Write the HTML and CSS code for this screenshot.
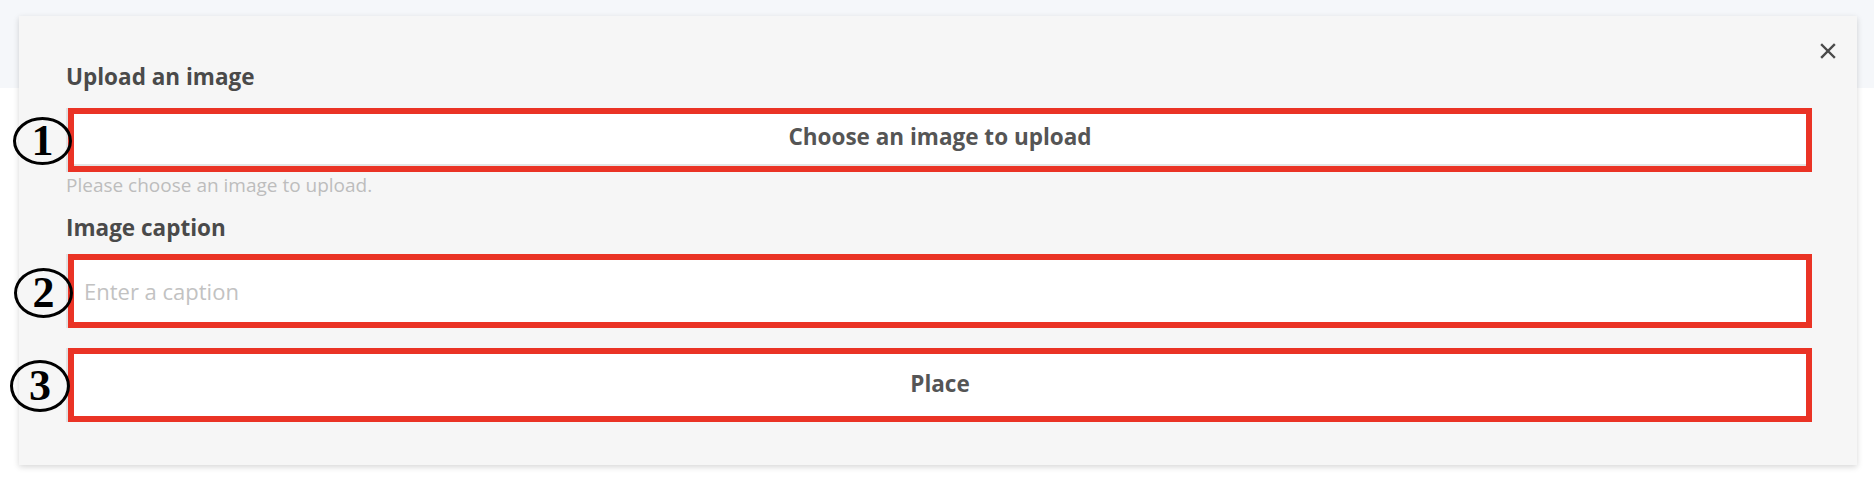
FILE: index.html
```html
<!DOCTYPE html>
<html>
<head>
<meta charset="utf-8">
<link rel="stylesheet" href="styles.css">
</head>
<body>
<div class="panel">
  <button class="close" aria-label="Close">
    <svg width="16" height="16" viewBox="0 0 16 16"><path d="M2 2L14 14M14 2L2 14" stroke="#4a4a4a" stroke-width="2.4" stroke-linecap="square"/></svg>
  </button>
  <div class="label label-first">Upload an image</div>
  <div class="field field-upload">
    <span class="marker marker-1">1</span>
    <button class="box box-upload">Choose an image to upload</button>
  </div>
  <div class="help">Please choose an image to upload.</div>
  <div class="label label-second">Image caption</div>
  <div class="field field-caption">
    <span class="marker marker-2">2</span>
    <input class="box box-input" type="text" placeholder="Enter a caption">
  </div>
  <div class="field field-place">
    <span class="marker marker-3">3</span>
    <button class="box box-place">Place</button>
  </div>
</div>
</body>
</html>
```

FILE: styles.css
```css
html, body {
  margin: 0;
  padding: 0;
}
body {
  width: 1874px;
  height: 484px;
  background: linear-gradient(#f5f7fa 0, #f5f7fa 88px, #ffffff 88px);
  font-family: "Open Sans", "Liberation Sans", sans-serif;
  overflow: hidden;
}
.panel {
  position: relative;
  box-sizing: border-box;
  margin: 16px 0 0 19px;
  width: 1838px;
  height: 449px;
  background: #f6f6f6;
  box-shadow: 0 2px 6px rgba(0, 0, 0, 0.16);
  padding: 47px 45px 0 47px;
  display: flex;
  flex-direction: column;
}
.close {
  position: absolute;
  top: 27px;
  right: 21px;
  width: 16px;
  height: 16px;
  padding: 0;
  border: 0;
  background: none;
  display: flex;
}
.label {
  font-size: 22.5px;
  font-weight: 700;
  line-height: 28px;
  color: #4a4a4a;
}
.label-second {
  margin-top: 18px;
}
.field {
  position: relative;
  border-left: 2px solid #e2e2e2;
  display: flex;
}
.field-upload {
  margin-top: 17px;
}
.field-caption {
  margin-top: 12px;
}
.field-place {
  margin-top: 20px;
}
.box {
  box-sizing: border-box;
  flex: 1;
  border: 6px solid #ea3325;
  background: #ffffff;
  font-family: "Open Sans", "Liberation Sans", sans-serif;
  font-size: 22.5px;
  color: #555555;
  margin: 0;
  outline: none;
}
.box-upload {
  height: 64px;
  font-weight: 700;
  box-shadow: inset 0 -2px 0 #e4e4e4;
  padding: 0 0 8px;
}
.box-input {
  height: 74px;
  padding: 0 10px;
  font-size: 22px;
  font-weight: 400;
}
.box-input::placeholder {
  color: #c2c2c2;
}
.box-place {
  height: 74px;
  font-weight: 700;
  padding: 0 0 4px;
}
.help {
  margin-top: 2px;
  font-size: 19px;
  line-height: 22px;
  color: #bdbdbd;
}
.marker {
  position: absolute;
  box-sizing: border-box;
  border: 3px solid #000;
  border-radius: 50%;
  background: transparent;
  font-family: "Liberation Serif", "Times New Roman", serif;
  font-weight: 700;
  font-size: 44px;
  color: #000;
  display: flex;
  align-items: center;
  justify-content: center;
  line-height: 1;
  z-index: 2;
}
.marker-1 {
  left: -55px;
  top: 9px;
  width: 59px;
  height: 48px;
}
.marker-2 {
  left: -54px;
  top: 14px;
  width: 59px;
  height: 50px;
}
.marker-3 {
  left: -58px;
  top: 12px;
  width: 60px;
  height: 52px;
}
```
